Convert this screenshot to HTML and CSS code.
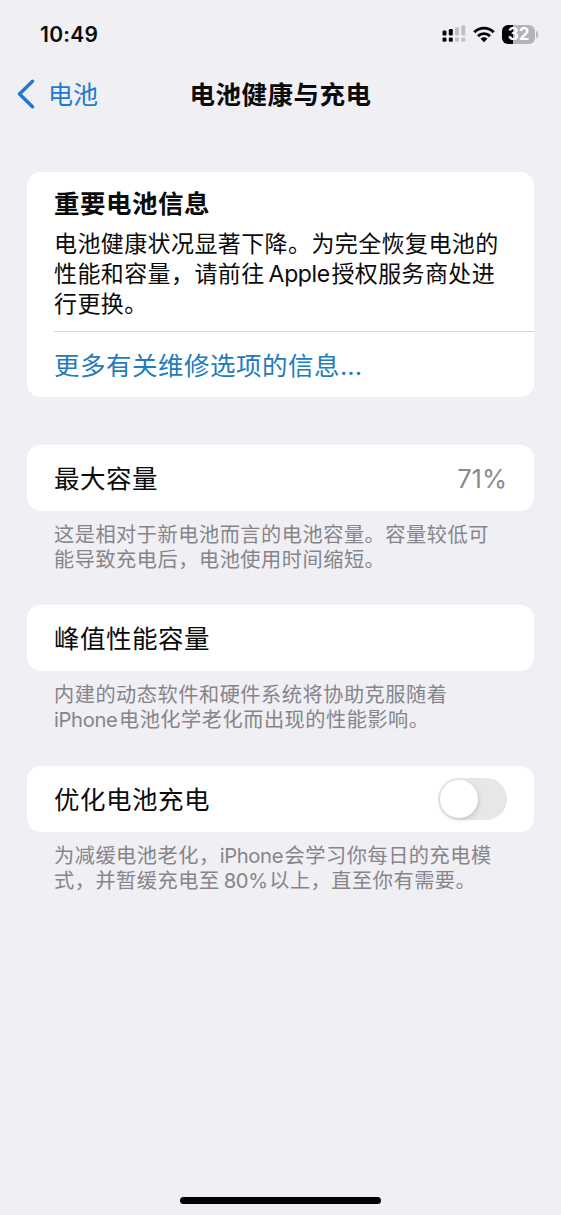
FILE: index.html
```html
<!DOCTYPE html>
<html lang="zh-CN">
<head>
<meta charset="utf-8">
<title>电池健康与充电</title>
<link rel="stylesheet" href="styles.css">
</head>
<body>
<div class="screen">
  <header class="status">
    <time class="clock">10:49</time>
    <div class="status-icons">
      <svg class="signal" viewBox="0 0 24 18" width="24" height="18">
        <g fill="#050506"><rect x="0.5" y="5.5" width="4" height="5" rx="1.2"/><rect x="6.8" y="4" width="4" height="6.5" rx="1.2"/><rect x="0.5" y="12.5" width="4" height="4.2" rx="1.3"/><rect x="6.8" y="12.5" width="4" height="4.2" rx="1.3"/></g>
        <g fill="#c0c0c4"><rect x="13" y="2.3" width="4" height="8.2" rx="1.2"/><rect x="19.3" y="0.3" width="4" height="10.2" rx="1.2"/><rect x="13" y="12.5" width="4" height="4.2" rx="1.3"/><rect x="19.3" y="12.5" width="4" height="4.2" rx="1.3"/></g>
      </svg>
      <svg class="wifi" viewBox="0 0 22 17" width="22" height="17">
        <g fill="none" stroke="#050506" stroke-width="2.9"><path d="M1.3 6.2C6.6 .7 15.4 .7 20.7 6.2"/><path d="M5 10.1C8.3 6.8 13.7 6.8 17 10.1"/></g>
        <path d="M7.6 12.7C9.5 10.9 12.5 10.9 14.4 12.7L11 16.2Z" fill="#050506"/>
      </svg>
      <div class="battery"><span class="battery-level">32</span></div>
    </div>
  </header>
  <nav class="navbar">
    <a class="back"><svg viewBox="0 0 18 30" width="18" height="30"><path d="M15.5 2.2L2.5 15L15.5 27.8" fill="none" stroke="#1f78d2" stroke-width="3.4" stroke-linecap="round" stroke-linejoin="round"/></svg><span class="back-label">电池</span></a>
    <h1 class="title">电池健康与充电</h1>
  </nav>
  <main class="content">
    <section class="card notice">
      <div class="notice-body">
        <h2 class="notice-title">重要电池信息</h2>
        <p class="notice-text">电池健康状况显著下降。为完全恢复电池的<br>性能和容量，请前往<span class="latin">Apple</span>授权服务商处进<br>行更换。</p>
      </div>
      <a class="link">更多有关维修选项的信息<span class="dots">...</span></a>
    </section>
    <section class="group first">
      <div class="card row"><span class="label">最大容量</span><span class="value">71%</span></div>
      <p class="footnote">这是相对于新电池而言的电池容量。容量较低可<br>能导致充电后，电池使用时间缩短。</p>
    </section>
    <section class="group second">
      <div class="card row"><span class="label">峰值性能容量</span></div>
      <p class="footnote">内建的动态软件和硬件系统将协助克服随着<br><span class="latin start">iPhone</span>电池化学老化而出现的性能影响。</p>
    </section>
    <section class="group third">
      <div class="card row"><span class="label">优化电池充电</span><span class="switch"><span class="knob"></span></span></div>
      <p class="footnote">为减缓电池老化，<span class="latin start">iPhone</span>会学习你每日的充电模<br>式，并暂缓充电至<span class="latin">80%</span>以上，直至你有需要。</p>
    </section>
  </main>
  <div class="home-bar"></div>
</div>
</body>
</html>
```
FILE: styles.css
```css
* { box-sizing: border-box; }
body {
  margin: 0;
  background: #f0eff4;
  color: #0b0b0c;
  font-family: Inter, "Noto Sans CJK SC", sans-serif;
}
h1, h2, p { margin: 0; }
.screen {
  width: 561px;
  height: 1215px;
  display: flex;
  flex-direction: column;
  overflow: hidden;
}
.status {
  height: 68px;
  padding: 0 23px 0 40px;
  display: flex;
  align-items: center;
  justify-content: space-between;
}
.clock { font-size: 21px; font-weight: 600; letter-spacing: 0.3px; }
.status-icons { display: flex; align-items: center; gap: 7px; }
.battery {
  width: 33px;
  height: 19px;
  margin-right: 3px;
  border-radius: 6px;
  background: linear-gradient(90deg, #050506 32%, #b4b4b8 32%);
  position: relative;
}
.battery::after {
  content: "";
  position: absolute;
  left: 34px;
  top: 6px;
  width: 2px;
  height: 7px;
  border-radius: 0 2px 2px 0;
  background: #b9b9bd;
}
.battery-level {
  display: block;
  text-align: center;
  color: #fff;
  font-size: 17px;
  line-height: 19px;
  font-weight: 700;
}
.navbar {
  height: 52px;
  padding: 0 17px;
  display: grid;
  grid-template-columns: 1fr auto 1fr;
  align-items: center;
}
.back {
  display: flex;
  align-items: center;
  gap: 13px;
  color: #1f78d2;
  font-size: 25px;
  line-height: 36px;
}
.back-label { padding-top: 2px; }
.title {
  padding-bottom: 2px;
  font-family: "Noto Sans CJK SC", sans-serif;
  font-size: 25.5px;
  line-height: 36px;
  letter-spacing: 0.5px;
  font-weight: 600;
}
.content { padding: 52px 27px 0; flex: 1; }
.card { background: #fff; border-radius: 14px; }
.notice { height: 225px; padding-left: 27px; }
.notice-body { height: 160px; padding-top: 14px; border-bottom: 1px solid #d3d3d6; }
.notice-title { font-size: 25.5px; line-height: 36px; letter-spacing: 0.5px; font-weight: 600; }
.notice-text { margin-top: 7px; font-size: 23px; line-height: 30px; letter-spacing: 0.4px; white-space: nowrap; }
.link { display: block; font-size: 25.5px; line-height: 68px; letter-spacing: 0.5px; color: #237bbb; }
.dots { letter-spacing: 0; }
.group { height: 160px; }
.first { margin-top: 48px; }
.second, .third { height: 161px; }
.row {
  height: 66px;
  padding: 0 27px;
  display: flex;
  align-items: center;
  justify-content: space-between;
  font-size: 25.5px;
  letter-spacing: 0.5px;
}
.label { padding-bottom: 4px; }
.value { color: #8a8a8e; letter-spacing: 0; font-size: 25.5px; }
.footnote {
  padding: 11px 0 0 27px;
  font-size: 20.2px;
  line-height: 25px;
  letter-spacing: 0.52px;
  color: #85858a;
  white-space: nowrap;
}
.latin { letter-spacing: -0.35px; margin: 0 1.5px 0 4px; }
.start { margin-left: 0; }
.switch {
  width: 69px;
  height: 42px;
  padding: 2px;
  border-radius: 21px;
  background: #e6e8e8;
}
.knob {
  display: block;
  width: 38px;
  height: 38px;
  border-radius: 50%;
  background: #fff;
  box-shadow: 1px 2px 5px rgba(0, 0, 0, 0.14);
}
.home-bar {
  width: 201px;
  height: 7px;
  margin: 0 auto 11px;
  border-radius: 4px;
  background: #000;
}
```
